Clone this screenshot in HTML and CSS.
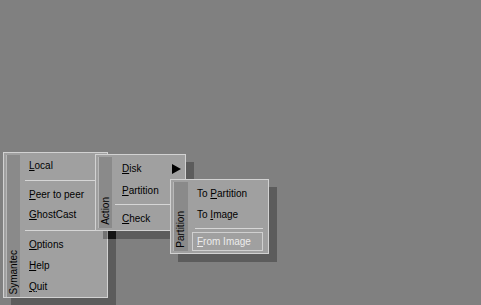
FILE: index.html
```html
<!DOCTYPE html>
<html lang="en">

<head>
    <meta charset="UTF-8">
    <meta name="viewport" content="width=device-width, initial-scale=1.0">
    <title>Ghost Menu</title>
    <link rel="stylesheet" href="styles.css">
</head>

<body>
    <div class="desktop">
        <div class="menu menu-main">
            <div class="strip"><span>Symantec</span></div>
            <ul class="items">
                <li class="item"><u>L</u>ocal</li>
                <li class="sep"></li>
                <li class="item"><u>P</u>eer to peer</li>
                <li class="item"><u>G</u>hostCast</li>
                <li class="sep sep-wide"></li>
                <li class="item tall"><u>O</u>ptions</li>
                <li class="item tall"><u>H</u>elp</li>
                <li class="item tall"><u>Q</u>uit</li>
            </ul>
        </div>

        <div class="menu menu-action">
            <div class="strip"><span>Action</span></div>
            <ul class="items">
                <li class="item has-sub"><u>D</u>isk
                    <svg class="arrow" width="9" height="10" viewBox="0 0 9 10"><polygon points="0,0 9,5 0,10" fill="#000"/></svg>
                </li>
                <li class="item"><u>P</u>artition</li>
                <li class="sep"></li>
                <li class="item"><u>C</u>heck</li>
            </ul>
            <div class="shadow-corner"></div>
        </div>

        <div class="menu menu-partition">
            <div class="strip"><span>Partition</span></div>
            <ul class="items">
                <li class="item">To <u>P</u>artition</li>
                <li class="item">To <u>I</u>mage</li>
                <li class="sep"></li>
                <li class="item selected"><u>F</u>rom Image</li>
            </ul>
        </div>
    </div>
</body>

</html>
```

FILE: styles.css
```css
body {
    margin: 0;
    background-color: #808080;
    font-family: "Liberation Sans", Arial, sans-serif;
    font-size: 10px;
    color: #000;
}

.desktop {
    position: relative;
    width: 481px;
    height: 305px;
    overflow: hidden;
}

/* menu windows sit on the desktop at fixed spots */
.menu {
    position: absolute;
    display: flex;
    box-sizing: border-box;
    background-color: #a0a0a0;
    border: 1px solid #d2d2d2;
    padding: 2px 0 2px 2px;
    box-shadow: 8px 8px 0 rgba(0, 0, 0, 0.28);
}

.strip {
    display: flex;
    flex-direction: column;
    justify-content: flex-end;
    align-items: center;
    width: 14px;
    background-color: #8a8a8a;
    border-left: 1px solid #b8b8b8;
    box-sizing: border-box;
    padding-bottom: 3px;
}

.strip span {
    writing-mode: vertical-rl;
    transform: rotate(180deg);
    line-height: 12px;
    white-space: nowrap;
}

.items {
    list-style: none;
    margin: 0;
    flex: 1;
    padding: 1px 1px 0 5px;
}

.item {
    position: relative;
    height: 20px;
    line-height: 20px;
    padding-left: 4px;
    white-space: nowrap;
}

.item.tall {
    height: 21px;
    line-height: 21px;
}

.item u {
    text-underline-offset: 1px;
}

.sep {
    height: 1px;
    background-color: #d6d6d6;
    margin: 4px 0;
}

.sep-wide {
    margin: 5px 0 3px;
}

.arrow {
    position: absolute;
    right: 3px;
    top: 6px;
}

/* where two shadows overlap it goes almost black */
.shadow-corner {
    position: absolute;
    left: 12px;
    top: 76px;
    width: 8px;
    height: 8px;
    background-color: #141414;
}

.menu-main {
    left: 3px;
    top: 152px;
    width: 105px;
    height: 146px;
    padding-bottom: 0;
}

.menu-action {
    left: 95px;
    top: 154px;
    width: 91px;
    height: 77px;
}

.menu-action .items {
    padding-left: 3px;
}

.menu-action .item {
    height: 22px;
    line-height: 22px;
    padding-left: 7px;
}

.menu-action .sep {
    margin: 2px 0 4px;
}

.menu-action .item:last-child {
    height: 20px;
    line-height: 20px;
}

.menu-partition {
    left: 170px;
    top: 179px;
    width: 99px;
    height: 75px;
}

.menu-partition .strip {
    width: 15px;
}

.menu-partition .items {
    padding: 1px 5px 0 4px;
}

.menu-partition .item {
    height: 21px;
    line-height: 21px;
    padding-left: 5px;
}

.menu-partition .sep {
    margin: 3px 0 3px 3px;
}

.menu-partition .item.selected {
    height: 19px;
    line-height: 17px;
    box-sizing: border-box;
    border: 1px solid #d0d0d0;
    padding-left: 4px;
    color: #ececec;
}
```
